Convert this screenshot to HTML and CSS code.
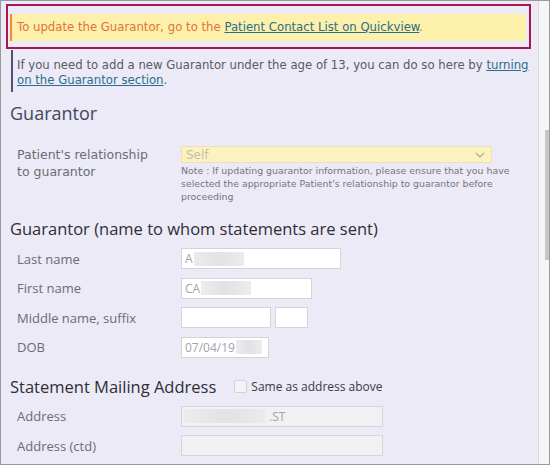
FILE: index.html
```html
<!DOCTYPE html>
<html lang="en">
<head>
    <meta charset="UTF-8">
    <title>Guarantor</title>
    <link rel="stylesheet" href="styles.css">
</head>
<body>
    <div class="frame">
        <div class="content">
            <div class="alert-box">
                <div class="alert">
                    To update the Guarantor, go to the <a href="#">Patient Contact List on Quickview</a>.
                </div>
            </div>
            <div class="info">
                If you need to add a new Guarantor under the age of 13, you can do so here by <a href="#">turning on the Guarantor section</a>.
            </div>

            <div class="form">
                <h2 class="section-title">Guarantor</h2>
                <div class="row relation-row">
                    <label class="field-label rel-label"><span class="rel-label-text">Patient's relationship to guarantor</span></label>
                    <div class="field">
                        <div class="select">
                            <span>Self</span>
                            <svg width="10" height="6" viewBox="0 0 10 6"><path d="M1 1 L5 5 L9 1" fill="none" stroke="#b8b08a" stroke-width="1.3"/></svg>
                        </div>
                        <p class="note">Note : If updating guarantor information, please ensure that you have selected the appropriate Patient's relationship to guarantor before proceeding</p>
                    </div>
                </div>

                <h2 class="sub-title name-title">Guarantor (name to whom statements are sent)</h2>
                <div class="row">
                    <label class="field-label">Last name</label>
                    <div class="input w-last"><span class="val">A</span><span class="blur"></span></div>
                </div>
                <div class="row">
                    <label class="field-label">First name</label>
                    <div class="input w-first"><span class="val">CA</span><span class="blur"></span></div>
                </div>
                <div class="row">
                    <label class="field-label">Middle name, suffix</label>
                    <div class="input w-middle"></div>
                    <div class="input w-suffix"></div>
                </div>
                <div class="row">
                    <label class="field-label">DOB</label>
                    <div class="input w-dob"><span class="val">07/04/19</span><span class="blur short"></span></div>
                </div>

                <div class="sub-head">
                    <h2 class="sub-title">Statement Mailing Address</h2>
                    <label class="check"><span class="box"></span>Same as address above</label>
                </div>
                <div class="row">
                    <label class="field-label">Address</label>
                    <div class="input disabled w-addr"><span class="blur wide"></span><span class="val">.ST</span></div>
                </div>
                <div class="row">
                    <label class="field-label">Address (ctd)</label>
                    <div class="input disabled w-addr"></div>
                </div>
            </div>
        </div>
        <div class="scrollbar">
            <div class="thumb"></div>
        </div>
    </div>
</body>
</html>
```

FILE: styles.css
```css
html, body {
    margin: 0;
    padding: 0;
}

body {
    font-family: "Open Sans", sans-serif;
    background: #ebeaf6;
}

.frame {
    display: flex;
    height: 465px;
    box-sizing: border-box;
    border: 1px solid #9a9a9e;
    overflow: hidden;
}

.content {
    flex: 1;
    padding: 3px 7px 0 5px;
    overflow: hidden;
}

.scrollbar {
    width: 10px;
    background: #f6f6f8;
    border-left: 1px solid #d8d8de;
    display: flex;
    justify-content: flex-end;
}

.thumb {
    width: 4px;
    height: 130px;
    margin-top: 129px;
    background: #c6c6ca;
}

a {
    color: #2b6d8c;
}

.alert-box {
    border: 2px solid #a6184f;
    padding: 8px 3px 6px 2px;
}

.alert {
    background: #fcf0aa;
    border-left: 2px solid #f08a3c;
    padding: 5px 5px 6px 5px;
    font-family: "DejaVu Sans", sans-serif;
    font-size: 11.7px;
    line-height: 16px;
    color: #e2723a;
}

.info {
    margin: 1px 0 0 5px;
    border-left: 2px solid #50526e;
    padding: 8px 0 4px 4px;
    font-family: "DejaVu Sans", sans-serif;
    font-size: 11.7px;
    line-height: 15px;
    color: #5a5a62;
}

.form {
    padding-left: 4px;
}

.section-title {
    margin: 9px 0 0 0;
    font-size: 18px;
    line-height: 24px;
    font-weight: normal;
    color: #46465a;
}

.sub-title {
    margin: 0;
    font-size: 16.5px;
    line-height: 22px;
    font-weight: normal;
    color: #2e2e36;
}

.name-title {
    margin-bottom: 8px;
}

.row {
    display: flex;
    align-items: center;
    gap: 4px;
    margin-bottom: 8.5px;
}

.relation-row {
    align-items: flex-start;
    margin: 21px 0 15px 0;
}

.field-label {
    width: 160px;
    padding-left: 7px;
    flex-shrink: 0;
    font-size: 13px;
    color: #6c6c74;
}

.rel-label {
    font-family: "DejaVu Sans", sans-serif;
    font-size: 12.5px;
    line-height: 17px;
}

.rel-label-text {
    display: block;
    max-width: 140px;
}

.field {
    width: 311px;
}

.select {
    height: 17px;
    box-sizing: border-box;
    background: #fcf2bf;
    border: 1px solid #ebe2b0;
    display: flex;
    align-items: center;
    justify-content: space-between;
    padding: 0 6px 0 4px;
    font-family: "DejaVu Sans", sans-serif;
    font-size: 12px;
    color: #c4bfae;
}

.note {
    width: 330px;
    margin: 1px 0 0 0;
    font-family: "DejaVu Sans", sans-serif;
    font-size: 9.4px;
    line-height: 13px;
    color: #75757d;
}

.input {
    height: 21px;
    box-sizing: border-box;
    background: #ffffff;
    border: 1px solid #d4d4da;
    display: flex;
    align-items: center;
    padding-left: 2px;
    font-size: 12px;
    color: #a4a4aa;
}

.input.disabled {
    background: #f1f1f3;
}

.blur {
    display: inline-block;
    width: 50px;
    height: 14px;
    background: linear-gradient(90deg, #ececee, #e2e2e4, #ececee);
}

.blur.short {
    width: 26px;
}

.blur.wide {
    width: 82px;
    margin-right: 2px;
}

.val {
    padding: 0 1px;
}

.w-last { width: 160px; }
.w-first { width: 131px; }
.w-middle { width: 90px; }
.w-suffix { width: 33px; }
.w-dob { width: 88px; }
.w-addr { width: 202px; }

.sub-head {
    display: flex;
    align-items: center;
    gap: 18px;
    margin: 18px 0 8px 0;
}

.check {
    display: flex;
    align-items: center;
    gap: 4px;
    font-size: 12px;
    color: #3a3a42;
}

.box {
    width: 11px;
    height: 11px;
    border: 1px solid #d2d2d8;
    border-radius: 2px;
    background: #f4f4f6;
}
```
